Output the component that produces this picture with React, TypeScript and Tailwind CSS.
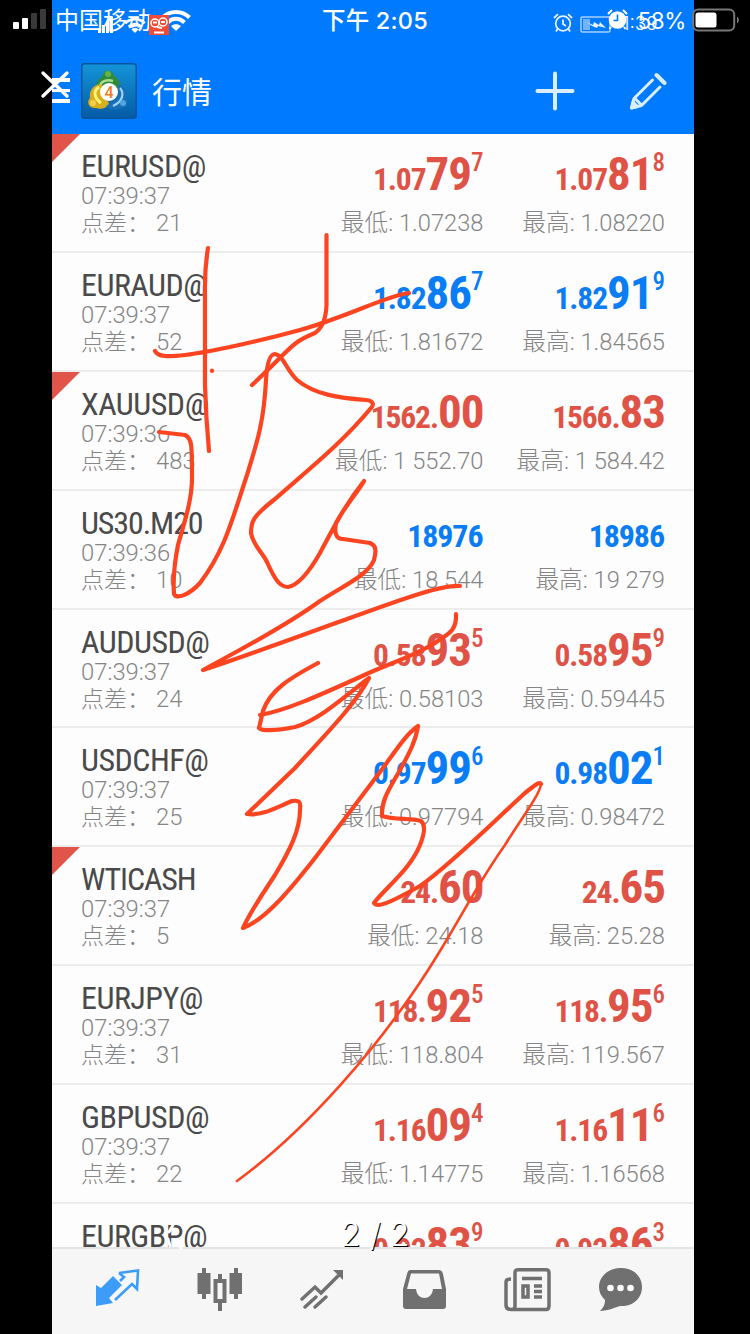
import { Plus } from "lucide-react";

type Price = { small: string; big?: string; sup?: string };

type Quote = {
  name: string;
  time: string;
  spread: string;
  bid: Price;
  ask: Price;
  low: string;
  high: string;
  up?: boolean;
  flag?: boolean;
};

const quotes: Quote[] = [
  { name: "EURUSD@", time: "07:39:37", spread: "21", bid: { small: "1.07", big: "79", sup: "7" }, ask: { small: "1.07", big: "81", sup: "8" }, low: "1.07238", high: "1.08220", flag: true },
  { name: "EURAUD@", time: "07:39:37", spread: "52", bid: { small: "1.82", big: "86", sup: "7" }, ask: { small: "1.82", big: "91", sup: "9" }, low: "1.81672", high: "1.84565", up: true },
  { name: "XAUUSD@", time: "07:39:36", spread: "483", bid: { small: "1562.", big: "00" }, ask: { small: "1566.", big: "83" }, low: "1 552.70", high: "1 584.42", flag: true },
  { name: "US30.M20", time: "07:39:36", spread: "10", bid: { small: "18976" }, ask: { small: "18986" }, low: "18 544", high: "19 279", up: true },
  { name: "AUDUSD@", time: "07:39:37", spread: "24", bid: { small: "0.58", big: "93", sup: "5" }, ask: { small: "0.58", big: "95", sup: "9" }, low: "0.58103", high: "0.59445" },
  { name: "USDCHF@", time: "07:39:37", spread: "25", bid: { small: "0.97", big: "99", sup: "6" }, ask: { small: "0.98", big: "02", sup: "1" }, low: "0.97794", high: "0.98472", up: true },
  { name: "WTICASH", time: "07:39:37", spread: "5", bid: { small: "24.", big: "60" }, ask: { small: "24.", big: "65" }, low: "24.18", high: "25.28", flag: true },
  { name: "EURJPY@", time: "07:39:37", spread: "31", bid: { small: "118.", big: "92", sup: "5" }, ask: { small: "118.", big: "95", sup: "6" }, low: "118.804", high: "119.567" },
  { name: "GBPUSD@", time: "07:39:37", spread: "22", bid: { small: "1.16", big: "09", sup: "4" }, ask: { small: "1.16", big: "11", sup: "6" }, low: "1.14775", high: "1.16568" },
];

// the last row is cut off by the tab bar, only its first line is visible
const lastQuote = {
  name: "EURGBP@",
  bid: { small: "0.92", big: "83", sup: "9" },
  ask: { small: "0.92", big: "86", sup: "3" },
};

const PriceText = ({ price }: { price: Price }) => (
  <div
    className={`flex h-[60px] w-[181.5px] items-baseline justify-end font-['Roboto_Condensed','Roboto',sans-serif] font-bold leading-[48px] ${
      price.big ? "" : "pt-[5px]"
    }`}
  >
    <span className={price.big ? "text-[31.5px] tracking-[-1.1px]" : "mr-px text-[32px] tracking-[-1.1px]"}>{price.small}</span>
    {price.big && <span className="text-[47px] tracking-[-1px]">{price.big}</span>}
    {price.sup && <span className="relative -top-[19px] text-[25px] font-medium">{price.sup}</span>}
  </div>
);

const PriceCell = ({ price, label, value }: { price: Price; label: string; value: string }) => (
  <div className="flex w-[181.5px] flex-col items-end pt-4">
    <PriceText price={price} />
    <div className="whitespace-nowrap text-[23.7px] font-light leading-[27px] text-[#858585]">
      {label}: {value}
    </div>
  </div>
);

const Name = ({ children }: { children: string }) => (
  <div
    className={`font-['Roboto_Condensed','Roboto',sans-serif] text-[32px] font-normal leading-[33px] text-[#4a4a4a] ${
      children.endsWith("@") ? "tracking-[-0.5px]" : "tracking-[-1.1px]"
    }`}
  >
    {children}
  </div>
);

const QuoteRow = ({ quote }: { quote: Quote }) => (
  <div className="relative flex h-[118.9px] shrink-0 border-b-2 border-[#ececec] px-[29px]">
    {quote.flag && (
      <svg className="absolute left-0 top-0 h-7 w-7" viewBox="0 0 28 28">
        <path d="M0 0H28L0 28Z" fill="#e0544a" />
      </svg>
    )}
    <div className="flex-1 whitespace-nowrap pt-4 text-[23.8px] font-light leading-[27px] text-[#858585]">
      <Name>{quote.name}</Name>
      <div>{quote.time}</div>
      <div className="flex">
        <span className="w-[75px] text-[23px]">点差：</span>
        <span>{quote.spread}</span>
      </div>
    </div>
    <div className={quote.up ? "flex text-[#0a7df5]" : "flex text-[#df5347]"}>
      <PriceCell price={quote.bid} label="最低" value={quote.low} />
      <PriceCell price={quote.ask} label="最高" value={quote.high} />
    </div>
  </div>
);

const Wifi = ({ className }: { className: string }) => (
  <svg className={className} viewBox="0 0 30 22" fill="none" stroke="currentColor" strokeWidth="4">
    <path d="M1.5 8.5C9 1 21 1 28.5 8.5M6.5 13.5C11.5 8.5 18.5 8.5 23.5 13.5" />
    <path d="M15 22L10 17C13 14.5 17 14.5 20 17Z" fill="currentColor" stroke="none" />
  </svg>
);

const AlarmOutline = () => (
  <svg className="h-5 w-5" viewBox="0 0 20 20" fill="none" stroke="currentColor" strokeWidth="1.8">
    <circle cx="10" cy="10.5" r="7.3" />
    <path d="M10 6.5V11L13 13M1 5L5 1.2M19 5L15 1.2M4.5 16L3 18.5M15.5 16L17 18.5" />
  </svg>
);

const AlarmSolid = () => (
  <svg className="h-[21px] w-[21px]" viewBox="0 0 21 21">
    <circle cx="10.5" cy="11" r="8.8" fill="#fff" />
    <path d="M1 5L5 1M20 5L16 1M4 18L2.5 20M17 18L18.5 20" stroke="#fff" strokeWidth="2" />
    <path d="M10.5 5.5V11.5H6.5" stroke="#007aff" strokeWidth="1.6" fill="none" />
  </svg>
);

const Logo = () => (
  <svg className="h-14 w-14" viewBox="0 0 56 56">
    <defs>
      <linearGradient id="tile" x1="0" y1="0" x2="0" y2="1">
        <stop offset="0" stopColor="#1494d8" />
        <stop offset="1" stopColor="#055ba5" />
      </linearGradient>
    </defs>
    <rect x="0.75" y="0.75" width="54.5" height="54.5" rx="3" fill="url(#tile)" stroke="#07569b" strokeWidth="1.5" />
    <path d="M16 25C15 19 18 15 22 13C22 6 32 6 33 13C38 16 41 21 39 27Z" fill="#2f8a3a" />
    <path d="M19 23C20 18 26 16 32 18" fill="none" stroke="#a9dc8b" strokeWidth="2.4" />
    <circle cx="27" cy="11" r="3" fill="#62b34a" />
    <path d="M20 21C11 22 8 29 9 35C5 39 8 46 15 45C20 47 26 45 28 41Z" fill="#d9ae1c" />
    <path d="M18 24C12 28 13 35 20 40" fill="none" stroke="#fff27a" strokeWidth="3" />
    <circle cx="12" cy="40" r="3" fill="#f0cf4a" />
    <path d="M37 21C44 24 47 30 45 35C49 39 46 46 40 45C34 48 27 46 25 43L36 36Z" fill="#1a6fb8" />
    <path d="M39 25C44 31 41 39 32 43" fill="none" stroke="#9bd4f4" strokeWidth="2.2" />
    <circle cx="42" cy="40" r="3" fill="#4ea7e2" />
    <circle cx="28" cy="29" r="9" fill="#fff" />
    <text x="28" y="34.5" textAnchor="middle" fontSize="16" fontWeight="500" fontFamily="Roboto, sans-serif" fill="#f47b20">4</text>
  </svg>
);

const StatusBar = () => (
  <div className="relative flex h-10 items-center justify-between text-white">
    <div className="flex items-center">
      <div className="ml-[13px] mt-[-2px] flex h-5 items-end gap-[3px]">
        <i className="h-[7px] w-[6px] rounded-[1px] bg-white" />
        <i className="h-[11px] w-[6px] rounded-[1px] bg-white" />
        <i className="h-4 w-[6px] rounded-[1px] bg-[#3a3a3a]" />
        <i className="h-5 w-[6px] rounded-[1px] bg-[#3a3a3a]" />
      </div>
      <span className="ml-[9px] mt-[2px] text-2xl">中国移动</span>
      <Wifi className="ml-[10px] h-[22px] w-[30px]" />
    </div>
    {/* second, smaller status strip showing through */}
    <div className="absolute left-[98px] top-[15px] flex h-5 items-center">
      <div className="flex h-4 items-end gap-[1px]">
        <i className="h-[5px] w-[3px] bg-white" />
        <i className="h-2 w-[3px] bg-white" />
        <i className="h-3 w-[3px] bg-white" />
        <i className="h-4 w-[3px] bg-white" />
      </div>
      <Wifi className="ml-[11px] h-4 w-[22px]" />
      <svg className="ml-[3px] h-5 w-5" viewBox="0 0 20 20">
        <rect width="20" height="20" fill="#f04b37" />
        <circle cx="6" cy="8" r="4" fill="none" stroke="#fff" strokeWidth="1.5" />
        <circle cx="14" cy="7" r="4" fill="none" stroke="#fff" strokeWidth="1.5" />
        <path d="M4 7.5H8M12 7H16M8 12L13 13M5 17.5H15" stroke="#fff" strokeWidth="1.8" />
      </svg>
    </div>
    <span className="absolute left-[322px] top-[6px] whitespace-nowrap font-['Inter','Noto_Sans_CJK_SC',sans-serif] text-[23.5px] font-medium leading-[30px] tracking-[0.2px]">
      下午 2:05
    </span>
    <div className="absolute left-[553px] top-[13px] opacity-90">
      <AlarmOutline />
    </div>
    <div className="absolute left-[580px] top-[15px] flex items-center">
      <svg className="h-[17px] w-8 opacity-90" viewBox="0 0 32 17">
        <rect x="1" y="1" width="29" height="15" rx="1.5" fill="none" stroke="#b8dcff" strokeWidth="1.5" />
        <rect x="3" y="3" width="7" height="11" fill="#7fbaff" />
        <path d="M7 6L13 9L14 6L19 9L20 6L26 12L18 10L17 12L12 10Z" fill="#fff" />
      </svg>
      <span className="ml-2.5 font-['Inter',sans-serif] text-[19px] font-light leading-[18px]">1:39</span>
    </div>
    <div className="absolute left-[607px] top-[9px]">
      <AlarmSolid />
    </div>
    <div className="flex items-center">
      <span className="mt-[2px] font-['Inter',sans-serif] text-[22.5px] leading-10 tracking-[-0.4px]">58%</span>
      <svg className="ml-1.5 mr-[10px] mt-[-1px] h-6 w-[48px]" viewBox="0 0 48 24">
        <rect x="1.2" y="1.5" width="41" height="21" rx="5" fill="none" stroke="#777" strokeWidth="2" />
        <rect x="3.5" y="4.5" width="21" height="15" rx="2.5" fill="#fff" />
        <path d="M45 8.5C47.5 10 47.5 14 45 15.5Z" fill="#777" />
      </svg>
    </div>
  </div>
);

const Header = () => (
  <header className="ml-[52px] mr-14 flex h-[94px] items-center pr-[27px] pt-[7px] text-white">
    <div className="flex w-[18px] flex-col gap-[7px]">
      <i className="h-[3.5px] bg-white" />
      <i className="h-[3.5px] bg-white" />
      <i className="h-[3.5px] bg-white" />
    </div>
    <div className="ml-[11px]">
      <Logo />
    </div>
    <span className="ml-[15px] mt-[3px] flex-1 text-[30px]">行情</span>
    <Plus className="h-[60px] w-[60px] text-[#d9efff]" strokeWidth={1.6} />
    <svg className="ml-11 h-[38px] w-[38px]" viewBox="0 0 38 38" fill="none" stroke="#d9efff" strokeWidth="3" strokeLinecap="round" strokeLinejoin="round">
      <path d="M23.5 8L5 26.5L2.5 36L12.5 33.5L31 15M6 26.5L12 32.5" />
      <path d="M27.500 3L35.500 11" strokeWidth="4" />
      <path d="M2.5 36L4 30L8.5 34.5Z" fill="#d9efff" />
    </svg>
  </header>
);

const NavBar = () => (
  <nav className="flex h-[87px] shrink-0 items-start border-t-2 border-[#e4e4e4] bg-[#f6f6f6] pl-[43px] pt-5 text-[#707070]">
    <svg className="h-[46px] w-[46px]" viewBox="0 0 46 46">
      <path d="M1 16L6 19L18 7L27 16L14 29L18 34L1 37Z" fill="#3d9cf8" />
      <path d="M24 4L43 1.500L42 20L37 15L20 31M24 4L29 8L25 12" fill="none" stroke="#3d9cf8" strokeWidth="2.6" />
    </svg>
    <svg className="ml-[55px] h-[46px] w-[46px] overflow-visible" viewBox="0 0 46 46" fill="currentColor">
      <path d="M6 -1H10V4H14.500V25H10V30H6V25H1.500V4H6ZM38 -1H42V4H46V25H42V30H38V25H33.500V4H38Z" />
      <path fillRule="evenodd" d="M22 5H26V10H30.500V34H26V42H22V34H17.500V10H22ZM21.500 14V30H26.500V14Z" />
    </svg>
    <svg className="ml-[58px] h-[46px] w-[46px]" viewBox="0 0 46 46" fill="none" stroke="currentColor" strokeWidth="3.4" strokeLinecap="round">
      <path d="M2 30L15 18L21 24L40 5M5 38L16 28M15 38L26 28" />
      <path d="M33 1H43V11Z" fill="currentColor" stroke="none" />
    </svg>
    <svg className="ml-[55px] h-[46px] w-[46px]" viewBox="0 0 46 46">
      <path fillRule="evenodd" fill="currentColor" d="M9 1H38Q41 1 42 5L45 20V37Q45 40 42 40H5Q2 40 2 37V20L6 5Q7 1 9 1ZM10 4.500L6 20H15C16 32 31 32 32 20H41L38 4.500Z" />
    </svg>
    <svg className="ml-[57px] h-[46px] w-[46px] overflow-visible" viewBox="0 0 46 46" fill="none" stroke="currentColor" strokeWidth="3.5">
      <path d="M11 4C11 1.500 12 .8 14 .8H42C44 .8 45 1.500 45 4V37C45 39 44 40.500 42 40.500H7C4 40.500 2 39 2 36V13C2 10.500 4 10 7 10M11 4V37C11 39 10 40.500 8 40.500" />
      <path d="M18 9.500H38M19 17H24V28H19ZM30 17H38M30 22.500H38M30 28H38" />
    </svg>
    <svg className="ml-[48px] h-[46px] w-[46px] overflow-visible" viewBox="0 0 46 46">
      <path d="M23-1C35-1 44 7 44 18C44 30 34 38 22 37C18 38 10 42 2 42C6 38 7 35 7 31C3 27 1 23 1 18C1 7 11-1 23-1Z" fill="currentColor" />
      <circle cx="12.500" cy="19" r="3.300" fill="#fff" />
      <circle cx="22.500" cy="19" r="3.300" fill="#fff" />
      <circle cx="32.500" cy="19" r="3.300" fill="#fff" />
    </svg>
  </nav>
);

// freehand red pen marks drawn over the list
const Scribble = () => (
  <svg className="pointer-events-none absolute inset-0 h-full w-full" viewBox="0 0 750 1334" fill="none" stroke="#fc4420" strokeWidth="4.2" strokeLinecap="round" strokeLinejoin="round">
    <path d="M208 248C204 272 205 280 205 300V385C206 420 208 440 209 451" />
    <path d="M155 351C158 357 168 357 185 355C210 352 260 341 300 330C350 316 385 296 409 293" />
    <path d="M326.500 235V305C326 320 322 328 315 333C290 343 292 348 252 385" />
    <path d="M212 370.500V371" />
    <path d="M159 432L185 435C192 438 192 445 192 478C192 500 185 520 178 545C174 565 173 580 174 594C177 600 190 594 200 583C225 550 232 520 247 475C258 440 264 420 266 380C267 362 270 354 275 354C284 356 285 368 297 380C315 395 340 398 366 400C374 401 374 405 371 408C340 445 310 468 275 499C252 517 251 522 251 533C253 545 262 552 267 562C275 580 280 587 288 587C300 585 312 567 320 553C335 525 345 505 364 481C358 492 345 506 336 523C334 533 336 539 343 539L370 543C377 546 376 552 374 560C368 575 345 585 320 601C280 630 230 655 203 670C235 660 330 625 350 618C400 600 440 585 460 586" />
    <path d="M456 614C457 632 447 634 435 643C410 658 390 663 360 677C320 695 285 711 260 715" />
    <path d="M318 663C290 678 270 690 263 711L259 728C262 731 275 731 295 727C320 720 350 692 369 678C355 705 325 735 295 768L247 814C262 816 275 808 292 801C299 800 301 801 300 810C300 830 290 850 275 875C262 895 250 912 243 928C265 920 290 890 315 858L380 772C395 752 405 735 418 726C416 740 410 752 400 770C390 788 381 800 382 816C395 820 410 818 421 821C426 825 424 835 420 845C410 870 385 888 374 903C377 910 400 897 420 886C450 865 490 825 525 793C535 785 540 781 541 784" />
    <path strokeWidth="2.6" d="M541 784C540 795 520 820 505 845C480 880 465 910 440 951C380 1050 300 1135 237 1181" />
  </svg>
);

export default function App() {
  return (
    <div className="relative flex h-[1334px] w-[750px] flex-col overflow-hidden bg-[linear-gradient(to_right,#000_52px,#007aff_52px,#007aff_694px,#000_694px)] font-['Roboto','Noto_Sans_CJK_SC',sans-serif]">
      <StatusBar />
      <Header />
      <main className="ml-[52px] flex min-h-0 w-[642px] flex-1 flex-col overflow-hidden bg-[#fdfdfd]">
        {quotes.map((quote) => (
          <QuoteRow key={quote.name} quote={quote} />
        ))}
        <div className="flex px-[29px] pt-4 text-[#df5347]">
          <div className="flex-1">
            <Name>{lastQuote.name}</Name>
          </div>
          <PriceText price={lastQuote.bid} />
          <PriceText price={lastQuote.ask} />
        </div>
      </main>
      <div className="ml-[52px] w-[642px]">
        <NavBar />
      </div>
      <svg className="absolute left-[40px] top-[70px] h-[29px] w-[30px]" viewBox="0 0 30 29" stroke="#fff" strokeWidth="3.4" strokeLinecap="round">
        <path d="M3 3L27 26M27 3L3 26" />
      </svg>
      {/* faint white smudge across the last symbol */}
      <svg className="absolute left-[160px] top-[1220px] h-8 w-6" viewBox="0 0 24 32" stroke="#fdfdfd" strokeLinecap="round" fill="none">
        <path d="M13 5L9 12M8 19L10 26M15 20L21 28" strokeWidth="3" />
      </svg>
      <Scribble />
      <div className="absolute left-[341px] top-[1215px] whitespace-pre font-['Inter',sans-serif] text-[32px] font-light leading-10 text-white [text-shadow:1px_1px_0_#000]">
        2 / 2
      </div>
    </div>
  );
}
